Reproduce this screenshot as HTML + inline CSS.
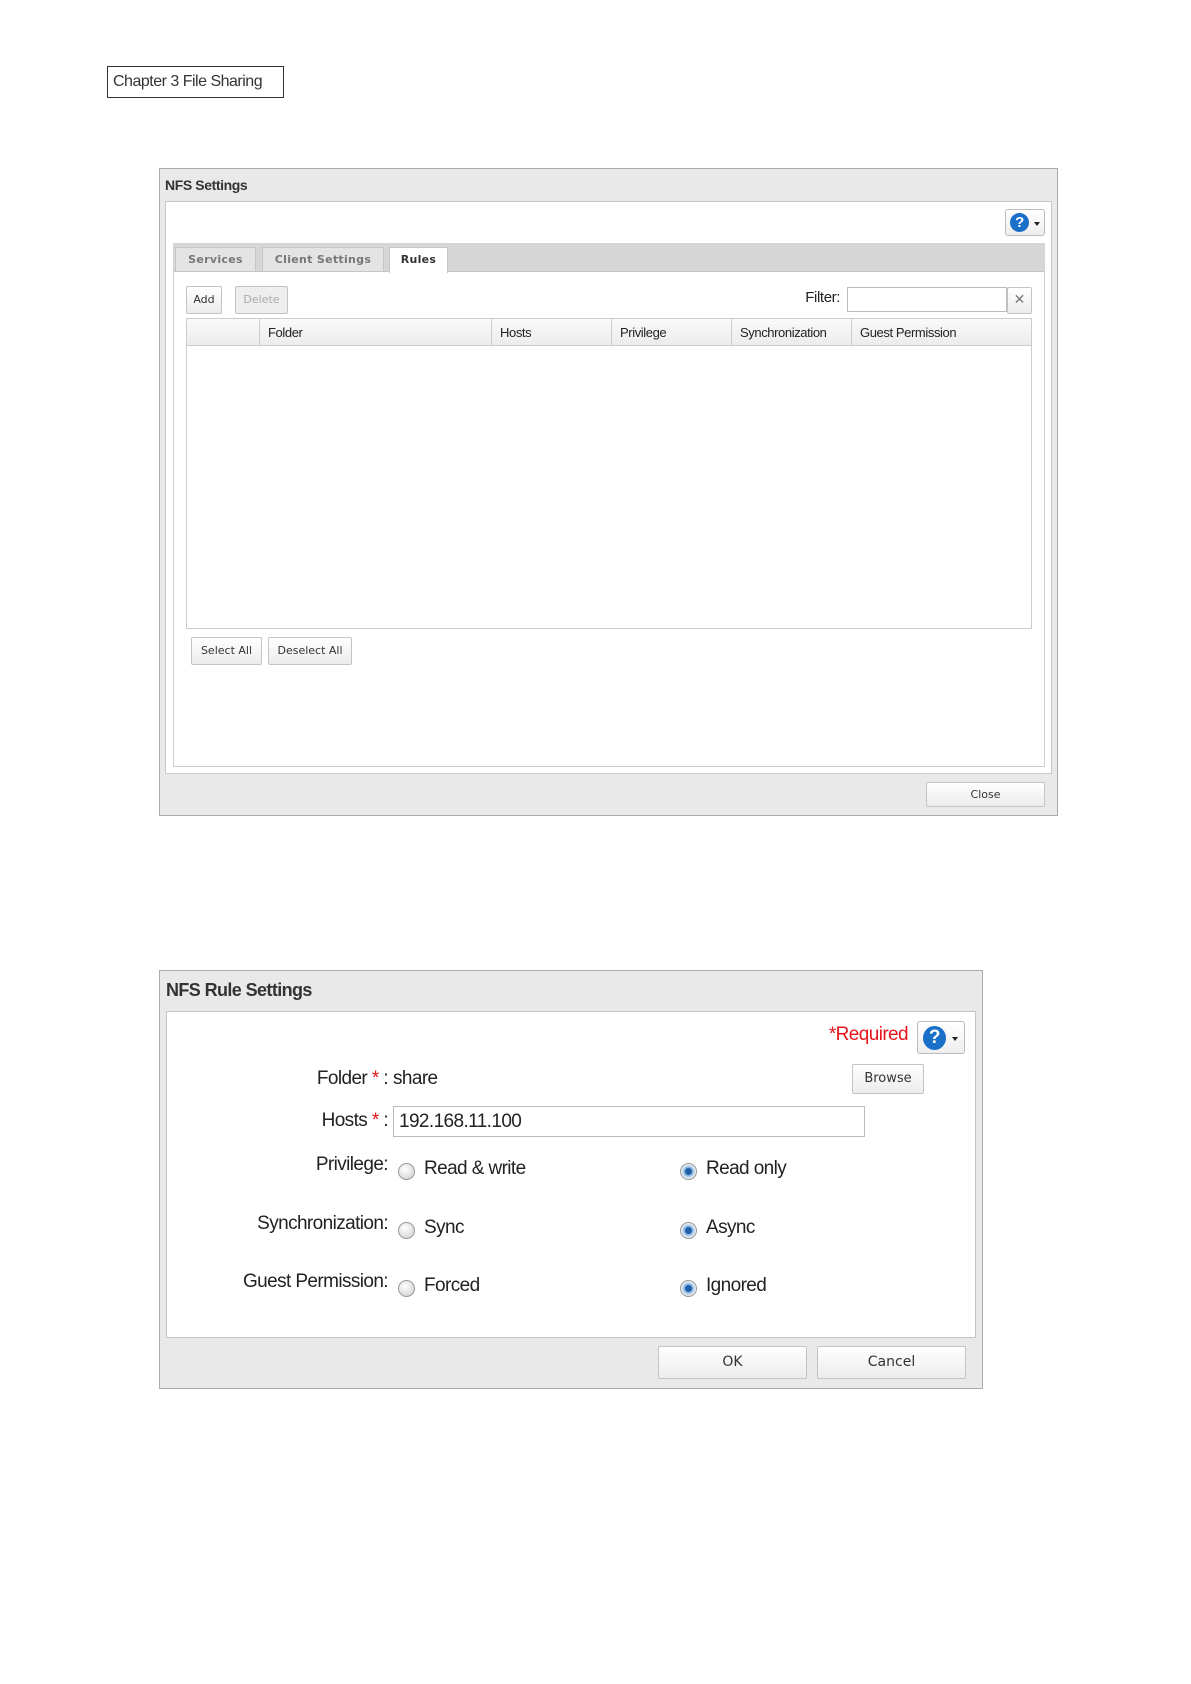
<!DOCTYPE html>
<html><head><meta charset="utf-8"><style>
*{box-sizing:border-box;margin:0;padding:0}
body{width:1191px;height:1684px;background:#fff;position:relative;font-family:"Liberation Sans",sans-serif;color:#222;overflow:hidden;letter-spacing:-0.4px}
.a{position:absolute;white-space:nowrap}
.btn{position:absolute;border:1px solid #c4c4c4;border-radius:2px;background:linear-gradient(#fff,#ececec);font-size:12px;text-align:center;color:#333;font-family:"DejaVu Sans",sans-serif;white-space:nowrap;letter-spacing:0}
.help{position:absolute;border:1px solid #bbb;border-radius:3px;background:linear-gradient(#fff,#eee)}
.help i{position:absolute;background:#1a6fc9;border-radius:50%;color:#fff;font-style:normal;font-weight:bold;text-align:center;font-family:"Liberation Sans",sans-serif}
.help b{position:absolute;width:0;height:0;border-left:3px solid transparent;border-right:3px solid transparent;border-top:4px solid #222}
.th{position:absolute;top:0;height:27px;line-height:27px;font-size:13px;padding-left:8px;border-left:1px solid #ccc}
.rad{position:absolute;width:17px;height:17px;border-radius:50%;border:1px solid #999;background:radial-gradient(circle at 40% 35%,#fff,#ccc)}
.rad.on{background:radial-gradient(circle,#1e5fa8 0 3px,#8ab6e0 4px,#e8eef5 7px)}
.lbl{position:absolute;font-size:19px;color:#222;white-space:nowrap;letter-spacing:-0.6px}
</style></head><body>
<div class="a" style="left:107px;top:66px;width:177px;height:32px;border:1px solid #333;font-size:16px;line-height:30px;padding-left:5px;color:#333;letter-spacing:-0.5px">Chapter 3 File Sharing</div>

<!-- Dialog 1 -->
<div class="a" style="left:159px;top:168px;width:899px;height:648px;background:#e9e9e9;border:1px solid #aaa">
 <div class="a" style="left:5px;top:8px;font-size:14px;font-weight:bold;color:#333">NFS Settings</div>
 <div class="a" style="left:5px;top:32px;width:887px;height:573px;background:#fff;border:1px solid #c8c8c8"></div>
 <div class="help" style="left:845px;top:40px;width:40px;height:27px"><i style="left:4px;top:3px;width:19px;height:19px;font-size:15px;line-height:19px">?</i><b style="left:28px;top:12px"></b></div>
 <div class="a" style="left:13px;top:74px;width:872px;height:29px;background:#d6d6d6;border-bottom:1px solid #c4c4c4"></div>
 <div class="a" style="left:15px;top:78px;width:81px;height:25px;background:#e4e4e4;border:1px solid #c6c6c6;font-size:11px;line-height:23px;text-align:center;color:#777;font-weight:bold;font-family:'DejaVu Sans',sans-serif;letter-spacing:0.3px">Services</div>
 <div class="a" style="left:102px;top:78px;width:122px;height:25px;background:#e4e4e4;border:1px solid #c6c6c6;font-size:11px;line-height:23px;text-align:center;color:#777;font-weight:bold;font-family:'DejaVu Sans',sans-serif;letter-spacing:0.3px">Client Settings</div>
 <div class="a" style="left:229px;top:78px;width:59px;height:26px;background:#fff;border:1px solid #c6c6c6;border-bottom:none;font-size:11px;line-height:23px;text-align:center;color:#333;font-weight:bold;font-family:'DejaVu Sans',sans-serif;letter-spacing:0.3px">Rules</div>
 <div class="a" style="left:13px;top:103px;width:872px;height:495px;border:1px solid #ccc;border-top:none"></div>
 <div class="btn" style="left:26px;top:117px;width:36px;height:28px;line-height:26px;font-size:11px">Add</div>
 <div class="btn" style="left:75px;top:117px;width:53px;height:28px;line-height:26px;font-size:11px;color:#aaa;background:#eee">Delete</div>
 <div class="a" style="left:630px;top:120px;width:50px;text-align:right;font-size:15px">Filter:</div>
 <div class="a" style="left:687px;top:118px;width:160px;height:25px;border:1px solid #bbb;background:#fff"></div>
 <div class="btn" style="left:847px;top:118px;width:25px;height:27px;line-height:25px;font-size:14px;color:#777">✕</div>
 <div class="a" style="left:26px;top:149px;width:846px;height:311px;border:1px solid #ccc;background:#fff">
  <div class="a" style="left:0;top:0;width:844px;height:27px;background:linear-gradient(#fafafa,#ececec);border-bottom:1px solid #ccc">
   <div class="th" style="left:72px;width:232px">Folder</div>
   <div class="th" style="left:304px;width:120px">Hosts</div>
   <div class="th" style="left:424px;width:120px">Privilege</div>
   <div class="th" style="left:544px;width:120px">Synchronization</div>
   <div class="th" style="left:664px;width:180px">Guest Permission</div>
  </div>
 </div>
 <div class="btn" style="left:31px;top:468px;width:71px;height:28px;line-height:26px;font-size:11px">Select All</div>
 <div class="btn" style="left:108px;top:468px;width:84px;height:28px;line-height:26px;font-size:11px">Deselect All</div>
 <div class="btn" style="left:766px;top:613px;width:119px;height:25px;line-height:23px;font-size:11px">Close</div>
</div>

<!-- Dialog 2 -->
<div class="a" style="left:159px;top:970px;width:824px;height:419px;background:#e9e9e9;border:1px solid #aaa">
 <div class="a" style="left:6px;top:9px;font-size:18px;font-weight:bold;color:#333;letter-spacing:-0.6px">NFS Rule Settings</div>
 <div class="a" style="left:6px;top:40px;width:810px;height:327px;background:#fff;border:1px solid #c4c4c4"></div>
 <div class="a" style="left:640px;top:53px;width:108px;text-align:right;font-size:19px;color:#e8141c;letter-spacing:-0.6px">*Required</div>
 <div class="help" style="left:757px;top:50px;width:48px;height:33px"><i style="left:5px;top:4px;width:23px;height:24px;font-size:19px;line-height:24px">?</i><b style="left:34px;top:15px"></b></div>
 <div class="lbl" style="left:100px;top:97px;width:128px;text-align:right">Folder <span style="color:#e8141c">*</span> :</div>
 <div class="lbl" style="left:233px;top:97px">share</div>
 <div class="btn" style="left:692px;top:93px;width:72px;height:30px;line-height:28px;font-size:13px">Browse</div>
 <div class="lbl" style="left:100px;top:139px;width:128px;text-align:right">Hosts <span style="color:#e8141c">*</span> :</div>
 <div class="a" style="left:233px;top:135px;width:472px;height:31px;border:1px solid #bbb;background:#fff;font-size:19px;line-height:29px;padding-left:5px;letter-spacing:-0.6px">192.168.11.100</div>
 <div class="lbl" style="left:40px;top:183px;width:188px;text-align:right">Privilege:</div>
 <div class="rad" style="left:238px;top:192px"></div><div class="lbl" style="left:264px;top:187px">Read &amp; write</div>
 <div class="rad on" style="left:520px;top:192px"></div><div class="lbl" style="left:546px;top:187px">Read only</div>
 <div class="lbl" style="left:40px;top:242px;width:188px;text-align:right">Synchronization:</div>
 <div class="rad" style="left:238px;top:251px"></div><div class="lbl" style="left:264px;top:246px">Sync</div>
 <div class="rad on" style="left:520px;top:251px"></div><div class="lbl" style="left:546px;top:246px">Async</div>
 <div class="lbl" style="left:20px;top:300px;width:208px;text-align:right">Guest Permission:</div>
 <div class="rad" style="left:238px;top:309px"></div><div class="lbl" style="left:264px;top:304px">Forced</div>
 <div class="rad on" style="left:520px;top:309px"></div><div class="lbl" style="left:546px;top:304px">Ignored</div>
 <div class="btn" style="left:498px;top:375px;width:149px;height:33px;line-height:31px;font-size:14px">OK</div>
 <div class="btn" style="left:657px;top:375px;width:149px;height:33px;line-height:31px;font-size:14px">Cancel</div>
</div>
</body></html>
